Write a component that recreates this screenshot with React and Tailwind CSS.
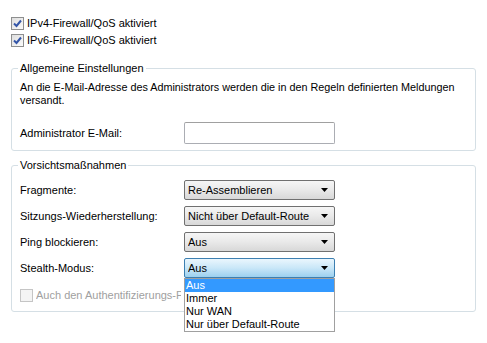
import { useState } from "react";

function CheckBox({ checked, disabled }) {
  return (
    <span
      className={`w-[13px] h-[13px] shrink-0 border flex items-center justify-center ${
        disabled
          ? "border-[#c5c5c5] bg-[#f4f4f4]"
          : "border-[#8e8f8f] bg-gradient-to-br from-[#dedede] to-[#fbfbfb]"
      }`}
    >
      {checked && (
        <svg width="9" height="9" viewBox="0 0 9 9">
          <path d="M1 4.5 L3.5 7 L8 1.5" fill="none" stroke="#3456a8" strokeWidth="2" />
        </svg>
      )}
    </span>
  );
}

function Select({ value, focused }) {
  return (
    <div
      className={`w-[151px] h-[20px] rounded-[2px] border flex items-center pl-[3px] pr-[6px] ${
        focused
          ? "border-[#3c7fb1] bg-gradient-to-b from-[#eaf6fd] via-[#c9e7f8] to-[#9bd0ef]"
          : "border-[#707070] bg-gradient-to-b from-[#f6f6f6] via-[#e9e9e9] to-[#d8d8d8]"
      }`}
    >
      <span className="flex-1 truncate">{value}</span>
      <svg width="7" height="4" viewBox="0 0 7 4">
        <path d="M0 0 H7 L3.5 4 Z" fill="#000" />
      </svg>
    </div>
  );
}

function Group({ title, children, className = "" }) {
  return (
    <fieldset
      className={`mx-[11px] border border-[#d5dfe5] rounded-[3px] px-[6px] ${className}`}
    >
      <legend className="px-[2px] leading-[13px]">{title}</legend>
      <div className="pl-[2px]">{children}</div>
    </fieldset>
  );
}

export default function App() {
  const [options] = useState(["Aus", "Immer", "Nur WAN", "Nur über Default-Route"]);

  return (
    <div
      className="w-[487px] h-[343px] bg-white text-black text-[11px] leading-[13px] relative overflow-hidden"
      style={{ fontFamily: '"Liberation Sans", Arial, sans-serif' }}
    >
      <div className="pt-[17px] pl-[11px] flex flex-col gap-[4px]">
        <label className="flex items-center gap-[3px]">
          <CheckBox checked />
          <span>IPv4-Firewall/QoS aktiviert</span>
        </label>
        <label className="flex items-center gap-[3px]">
          <CheckBox checked />
          <span>IPv6-Firewall/QoS aktiviert</span>
        </label>
      </div>

      <Group title="Allgemeine Einstellungen" className="mt-[15px] pb-[6px]">
        <p className="mt-[6px] text-[10.8px]">
          An die E-Mail-Adresse des Administrators werden die in den Regeln definierten Meldungen
          versandt.
        </p>
        <div className="mt-[15px] flex items-center">
          <span className="w-[164px]">Administrator E-Mail:</span>
          <div className="w-[151px] h-[22px] border border-[#abadb3] border-t-[#a0a0a0] rounded-[2px] bg-white" />
        </div>
      </Group>

      <Group title="Vorsichtsmaßnahmen" className="mt-[8px] pb-[9px]">
        <div className="mt-[8px] flex flex-col gap-[6px]">
          <div className="flex items-center">
            <span className="w-[164px]">Fragmente:</span>
            <Select value="Re-Assemblieren" />
          </div>
          <div className="flex items-center">
            <span className="w-[164px]">Sitzungs-Wiederherstellung:</span>
            <Select value="Nicht über Default-Route" />
          </div>
          <div className="flex items-center">
            <span className="w-[164px]">Ping blockieren:</span>
            <Select value="Aus" />
          </div>
          <div className="flex items-center">
            <span className="w-[164px]">Stealth-Modus:</span>
            <Select value="Aus" focused />
          </div>
          <label className="mt-[5px] flex items-center gap-[3px] text-[#a0a0a0]">
            <CheckBox disabled />
            <span className="w-[145px] overflow-hidden whitespace-nowrap">
              Auch den Authentifizierungs-Port schützen
            </span>
          </label>
        </div>
      </Group>

      <ul className="absolute left-[184px] top-[278px] w-[151px] border border-[#a0a0a0] bg-white">
        {options.map((o, i) => (
          <li
            key={o}
            className={`h-[13px] leading-[13px] pl-[1px] ${i === 0 ? "bg-[#3399ff] text-white" : ""}`}
          >
            {o}
          </li>
        ))}
      </ul>
    </div>
  );
}
